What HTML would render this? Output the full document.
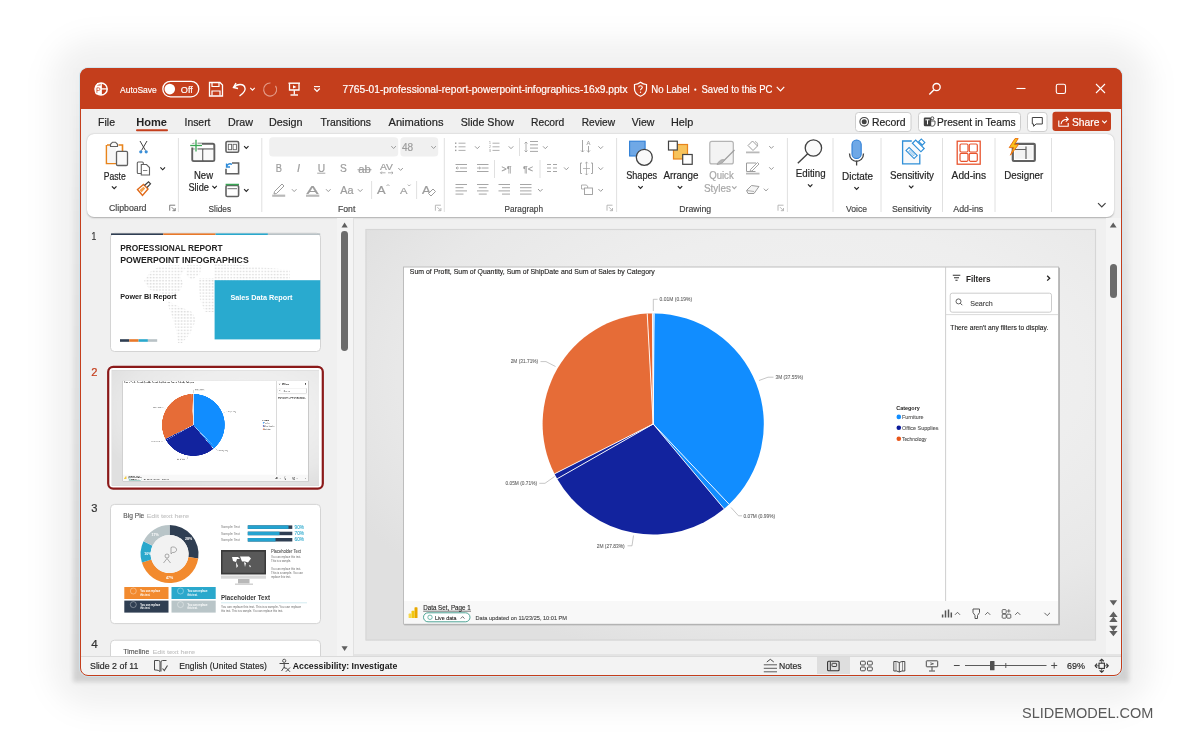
<!DOCTYPE html>
<html><head><meta charset="utf-8">
<style>
*{box-sizing:border-box;margin:0;padding:0}
html,body{width:1200px;height:743px;overflow:hidden;background:#fff;font-family:"Liberation Sans",sans-serif}
.a{position:absolute}
svg{position:absolute;left:0;top:0;will-change:transform}
text{font-family:"Liberation Sans",sans-serif;white-space:pre}
</style></head><body>
<div class="a" style="left:52px;top:40px;width:1098px;height:668px;border-radius:40px;background:rgba(0,0,0,0.055);filter:blur(14px)"></div>
<div class="a" style="left:73px;top:62px;width:1056px;height:620px;background:linear-gradient(180deg, rgba(0,0,0,0.0), rgba(0,0,0,0.05) 25%, rgba(0,0,0,0.08) 60%, rgba(0,0,0,0.13));filter:blur(2px)"></div>
<div class="a" style="left:80px;top:68px;width:1042px;height:608px;border-radius:8px;background:#f0f0f0"></div>
<div class="a" style="left:80px;top:68px;width:1042px;height:41px;border-radius:8px 8px 0 0;background:#c43e1c"></div>
<div class="a" style="left:87px;top:134px;width:1027px;height:83px;background:#fff;border-radius:7px;box-shadow:0 0.6px 1.6px rgba(0,0,0,0.28)"></div>
<div class="a" style="left:337px;top:218px;width:16px;height:438px;background:#f4f4f4"></div>
<div class="a" style="left:341.2px;top:231px;width:6.8px;height:120px;background:#6b6b6b;border-radius:3.4px"></div>
<div class="a" style="left:354px;top:653.5px;width:767px;height:2.5px;background:#e4e4e4"></div>
<div class="a" style="left:1106px;top:218px;width:15px;height:436px;background:#f5f5f5"></div>
<div class="a" style="left:1109.6px;top:264px;width:7px;height:33.5px;background:#6b6b6b;border-radius:3.5px"></div>
<div class="a" style="left:81px;top:656px;width:1040px;height:19px;background:#f3f3f3;border-top:1px solid #dadada;border-radius:0 0 7px 7px"></div>
<div class="a" style="left:816.7px;top:656.5px;width:33.3px;height:17.8px;background:#dedede"></div>
<svg width="1200" height="743" viewBox="0 0 1200 743">
<circle cx="101.1" cy="89" r="6.1" fill="none" stroke="#ffffff" stroke-width="1.5" />
<line x1="101.2" y1="83" x2="101.2" y2="95" stroke="#ffffff" stroke-width="1.3" />
<line x1="101.2" y1="88.9" x2="107" y2="88.9" stroke="#ffffff" stroke-width="1.3" />
<path d="M95.6 85.5 h5.6 v9 h-3.5 a2.6 2.6 0 0 1 -2.6 -2.6 z" stroke="none" stroke-width="1" fill="#ffffff" />
<path d="M96.9 92.8 v-5 h1.7 a1.35 1.35 0 0 1 0 2.7 h-1.7" stroke="#d9603f" stroke-width="0.9" fill="none" />
<path d="M97 83.3 C98.5 84.2 99.8 84.2 101.2 83.3" stroke="#ffffff" stroke-width="1" fill="none" />
<text x="120" y="92.62" font-size="9.1" fill="#ffffff" stroke="#ffffff" stroke-width="0.164" text-anchor="start" textLength="36.8" lengthAdjust="spacingAndGlyphs" >AutoSave</text>
<rect x="162.8" y="81.3" width="36" height="15.6" fill="none" rx="7.8" stroke="#ffffff" stroke-width="1.3" />
<circle cx="169.8" cy="89.1" r="5.3" fill="#ffffff" />
<text x="180.8" y="92.59" font-size="9.3" fill="#ffffff" stroke="#ffffff" stroke-width="0.167" text-anchor="start" textLength="12" lengthAdjust="spacingAndGlyphs" >Off</text>
<path d="M209.5 82.5 h10.5 l2.5 2.5 v11 h-13 z" stroke="#ffffff" stroke-width="1.3" fill="none" />
<path d="M212 82.5 v4 h7 v-4" stroke="#ffffff" stroke-width="1.2" fill="none" />
<path d="M212 95.5 v-4.5 h8 v4.5" stroke="#ffffff" stroke-width="1.2" fill="none" />
<path d="M236 83 L233.5 87.5 L238 88.5" stroke="#ffffff" stroke-width="1.4" fill="none" />
<path d="M234 87.3 C237 83.5 244 83.5 245 88 C246 91.5 242 94 239.5 96" stroke="#ffffff" stroke-width="1.4" fill="none" />
<path d="M250.25 87.8 L252.5 90.2 L254.75 87.8" stroke="#ffffff" stroke-width="1.1" fill="none" />
<path d="M270.5 83 A6.5 6.5 0 1 0 275.5 85.8" stroke="#e39a87" stroke-width="1.2" fill="none" />
<path d="M272.5 82 L276 85.5 L273 88" stroke="#e39a87" stroke-width="1.1" fill="none" opacity="0.0"/>
<rect x="288.5" y="82.5" width="11.5" height="1.4" fill="#ffffff" />
<path d="M289.5 83.5 v6.5 h9.5 v-6.5" stroke="#ffffff" stroke-width="1.3" fill="none" />
<path d="M293 85.2 L296.5 86.9 L293 88.6 z" stroke="none" stroke-width="1" fill="#ffffff" />
<line x1="294.3" y1="90.3" x2="294.3" y2="94.5" stroke="#ffffff" stroke-width="1.3" />
<line x1="290.5" y1="95" x2="298" y2="95" stroke="#ffffff" stroke-width="1.4" />
<line x1="314" y1="86.6" x2="320" y2="86.6" stroke="#ffffff" stroke-width="1.1" />
<path d="M314.2 88.5 L317 91.3 L319.8 88.5" stroke="#ffffff" stroke-width="1.2" fill="none" />
<text x="342.5" y="92.92" font-size="10.2" fill="#ffffff" stroke="#ffffff" stroke-width="0.184" text-anchor="start" textLength="285" lengthAdjust="spacingAndGlyphs" >7765-01-professional-report-powerpoint-infographics-16x9.pptx</text>
<path d="M640.5 82.3 C638.5 84 636.5 84.5 634.5 84.5 V89 C634.5 92.5 637 94.8 640.5 96.2 C644 94.8 646.5 92.5 646.5 89 V84.5 C644.5 84.5 642.5 84 640.5 82.3 Z" stroke="#ffffff" stroke-width="1.2" fill="none" />
<path d="M638.7 87.3 C638.7 85.3 642.3 85.3 642.3 87.3 C642.3 88.6 640.5 88.8 640.5 90.3" stroke="#ffffff" stroke-width="1.1" fill="none" />
<circle cx="640.5" cy="92.2" r="0.7" fill="#ffffff" />
<text x="651.2" y="92.92" font-size="10.2" fill="#ffffff" stroke="#ffffff" stroke-width="0.184" text-anchor="start" textLength="38.5" lengthAdjust="spacingAndGlyphs" >No Label</text>
<circle cx="695.3" cy="89.7" r="1.1" fill="#ffffff" />
<text x="701.5" y="92.92" font-size="10.2" fill="#ffffff" stroke="#ffffff" stroke-width="0.184" text-anchor="start" textLength="71" lengthAdjust="spacingAndGlyphs" >Saved to this PC</text>
<path d="M776.75 86.8 L780.5 90.8 L784.25 86.8" stroke="#ffffff" stroke-width="1.2" fill="none" />
<circle cx="936.6" cy="87.1" r="3.6" fill="none" stroke="#ffffff" stroke-width="1.3" />
<line x1="934" y1="89.8" x2="929.3" y2="94.5" stroke="#ffffff" stroke-width="1.4" />
<line x1="1016.5" y1="88.5" x2="1025.5" y2="88.5" stroke="#ffffff" stroke-width="1.1" />
<rect x="1056.3" y="84.3" width="9.2" height="9.2" fill="none" rx="1.8" stroke="#ffffff" stroke-width="1.1" />
<line x1="1096" y1="84" x2="1105" y2="93" stroke="#ffffff" stroke-width="1.1" />
<line x1="1105" y1="84" x2="1096" y2="93" stroke="#ffffff" stroke-width="1.1" />
<text x="98" y="126.48" font-size="11.2" fill="#242424" stroke="#242424" stroke-width="0.202" text-anchor="start" textLength="17" lengthAdjust="spacingAndGlyphs" >File</text>
<text x="136.2" y="126.48" font-size="11.2" fill="#242424" font-weight="700" text-anchor="start" textLength="30.8" lengthAdjust="spacingAndGlyphs" >Home</text>
<text x="184.5" y="126.48" font-size="11.2" fill="#242424" stroke="#242424" stroke-width="0.202" text-anchor="start" textLength="26" lengthAdjust="spacingAndGlyphs" >Insert</text>
<text x="228" y="126.48" font-size="11.2" fill="#242424" stroke="#242424" stroke-width="0.202" text-anchor="start" textLength="25" lengthAdjust="spacingAndGlyphs" >Draw</text>
<text x="269" y="126.48" font-size="11.2" fill="#242424" stroke="#242424" stroke-width="0.202" text-anchor="start" textLength="33.5" lengthAdjust="spacingAndGlyphs" >Design</text>
<text x="320.5" y="126.48" font-size="11.2" fill="#242424" stroke="#242424" stroke-width="0.202" text-anchor="start" textLength="50.5" lengthAdjust="spacingAndGlyphs" >Transitions</text>
<text x="388.5" y="126.48" font-size="11.2" fill="#242424" stroke="#242424" stroke-width="0.202" text-anchor="start" textLength="55" lengthAdjust="spacingAndGlyphs" >Animations</text>
<text x="460.7" y="126.48" font-size="11.2" fill="#242424" stroke="#242424" stroke-width="0.202" text-anchor="start" textLength="53.3" lengthAdjust="spacingAndGlyphs" >Slide Show</text>
<text x="531" y="126.48" font-size="11.2" fill="#242424" stroke="#242424" stroke-width="0.202" text-anchor="start" textLength="33.3" lengthAdjust="spacingAndGlyphs" >Record</text>
<text x="581.7" y="126.48" font-size="11.2" fill="#242424" stroke="#242424" stroke-width="0.202" text-anchor="start" textLength="33.3" lengthAdjust="spacingAndGlyphs" >Review</text>
<text x="631.7" y="126.48" font-size="11.2" fill="#242424" stroke="#242424" stroke-width="0.202" text-anchor="start" textLength="22.7" lengthAdjust="spacingAndGlyphs" >View</text>
<text x="671" y="126.48" font-size="11.2" fill="#242424" stroke="#242424" stroke-width="0.202" text-anchor="start" textLength="22.3" lengthAdjust="spacingAndGlyphs" >Help</text>
<rect x="136" y="129.2" width="32" height="2" fill="#c43e1c" rx="1" />
<rect x="855.5" y="112.5" width="55.5" height="19" fill="#fff" rx="3" stroke="#c8c8c8" stroke-width="0.9" />
<circle cx="864.2" cy="121.8" r="4.3" fill="none" stroke="#424242" stroke-width="1.1" />
<circle cx="864.2" cy="121.8" r="2.5" fill="#424242" />
<text x="872" y="126.14" font-size="10.8" fill="#242424" stroke="#242424" stroke-width="0.194" text-anchor="start" textLength="33.5" lengthAdjust="spacingAndGlyphs" >Record</text>
<rect x="918.5" y="112.5" width="102" height="19" fill="#fff" rx="3" stroke="#c8c8c8" stroke-width="0.9" />
<circle cx="932.3" cy="118.3" r="1.5" fill="none" stroke="#424242" stroke-width="0.9" />
<path d="M929.5 121 h5.5 v3 a2.8 2.8 0 0 1 -5.5 0 z" stroke="#424242" stroke-width="0.9" fill="#fff" />
<rect x="923.8" y="117.6" width="7.4" height="8.6" fill="#424242" rx="1.2" />
<path d="M925.4 119.8 h4.2 M927.5 119.8 v4.6" stroke="#fff" stroke-width="1" fill="none" />
<text x="937" y="126.14" font-size="10.8" fill="#242424" stroke="#242424" stroke-width="0.194" text-anchor="start" textLength="78.5" lengthAdjust="spacingAndGlyphs" >Present in Teams</text>
<rect x="1027.5" y="112.5" width="19.5" height="19" fill="#fff" rx="3" stroke="#c8c8c8" stroke-width="0.9" />
<path d="M1032.3 117.5 h10 v6.5 h-6.2 l-2.5 2.3 v-2.3 h-1.3 z" stroke="#424242" stroke-width="1" fill="none" />
<rect x="1052.5" y="111.8" width="58.5" height="19.2" fill="#c43e1c" rx="3" />
<path d="M1058.8 120.5 v5.8 h9.4 v-3.2" stroke="#fff" stroke-width="1.1" fill="none" />
<path d="M1061 124.3 C1061.5 120.5 1063.8 119.3 1068 119.3 M1065.8 116.9 L1068.3 119.3 L1065.8 121.7" stroke="#fff" stroke-width="1.1" fill="none" />
<text x="1072" y="126.21" font-size="11" fill="#fff" stroke="#fff" stroke-width="0.198" text-anchor="start" textLength="27.5" lengthAdjust="spacingAndGlyphs" >Share</text>
<path d="M1102.2 120.6 L1104.5 123.0 L1106.8 120.6" stroke="#fff" stroke-width="1.1" fill="none" />
<line x1="178.4" y1="138" x2="178.4" y2="212" stroke="#e0e0e0" stroke-width="1" />
<line x1="261.8" y1="138" x2="261.8" y2="212" stroke="#e0e0e0" stroke-width="1" />
<line x1="444.3" y1="138" x2="444.3" y2="212" stroke="#e0e0e0" stroke-width="1" />
<line x1="616.6" y1="138" x2="616.6" y2="212" stroke="#e0e0e0" stroke-width="1" />
<line x1="787.4" y1="138" x2="787.4" y2="212" stroke="#e0e0e0" stroke-width="1" />
<line x1="833" y1="138" x2="833" y2="212" stroke="#e0e0e0" stroke-width="1" />
<line x1="881" y1="138" x2="881" y2="212" stroke="#e0e0e0" stroke-width="1" />
<line x1="942.5" y1="138" x2="942.5" y2="212" stroke="#e0e0e0" stroke-width="1" />
<line x1="995" y1="138" x2="995" y2="212" stroke="#e0e0e0" stroke-width="1" />
<line x1="1051.5" y1="138" x2="1051.5" y2="212" stroke="#e0e0e0" stroke-width="1" />
<path d="M107 145 h3.5 M118.5 145 h4 v6" stroke="#e8841c" stroke-width="1.6" fill="none" />
<path d="M106.5 145 v18.5 h9.5" stroke="#e8841c" stroke-width="1.6" fill="none" />
<rect x="107.4" y="146" width="8.6" height="17" fill="#f7f7f7" />
<path d="M110.5 146.5 L110.5 144.3 L112.5 142.2 L115.5 142.2 L117.5 144.3 L117.5 146.5 Z" stroke="#616161" stroke-width="1.1" fill="#fafafa" />
<rect x="116.5" y="151.3" width="11" height="14.2" fill="#fafafa" rx="1.2" stroke="#616161" stroke-width="1.3" />
<text x="103.8" y="179.76" font-size="10.6" fill="#242424" stroke="#242424" stroke-width="0.191" text-anchor="start" textLength="22" lengthAdjust="spacingAndGlyphs" >Paste</text>
<path d="M111.9 186.3 L114.2 188.7 L116.5 186.3" stroke="#242424" stroke-width="1.2" fill="none" />
<path d="M140 141 L145.5 150.5 M147 141 L141.5 150.5" stroke="#424242" stroke-width="1" fill="none" />
<circle cx="140.8" cy="151.8" r="1.6" fill="#3b8fd8" />
<circle cx="146.2" cy="151.8" r="1.6" fill="#3b8fd8" />
<rect x="137.3" y="162" width="6" height="11.5" fill="#fff" rx="1" stroke="#616161" stroke-width="1.1" />
<path d="M141.3 164.5 h5.2 l3 3 v7.5 h-8.2 z" stroke="#616161" stroke-width="1.1" fill="#fff" />
<line x1="143" y1="170.5" x2="147.3" y2="170.5" stroke="#616161" stroke-width="0.8" />
<path d="M160.39999999999998 167.4 L162.7 169.79999999999998 L165.0 167.4" stroke="#242424" stroke-width="1.1" fill="none" />
<path d="M137.5 189.5 L143.5 184.5 L148 189 L142.5 195.5 Z" stroke="#e06a1a" stroke-width="1.4" fill="#fff" />
<path d="M139.5 190 L143.5 186.7 L145.2 188.5 L141.5 192.6 Z" stroke="none" stroke-width="1" fill="#f5a04a" />
<path d="M144.5 185.5 L148.5 181.8 L150.5 183.8 L147 187.5" stroke="#424242" stroke-width="1.2" fill="none" />
<text x="109" y="211.20" font-size="9.6" fill="#424242" stroke="#424242" stroke-width="0.173" text-anchor="start" textLength="37.5" lengthAdjust="spacingAndGlyphs" >Clipboard</text>
<path d="M169.7 210.7 v-5.5 h5.5" stroke="#707070" stroke-width="0.9" fill="none" />
<path d="M171.7 207.2 L175.2 210.7 M175.2 208.0 v2.7 h-2.7" stroke="#707070" stroke-width="0.9" fill="none" />
<rect x="192.3" y="143.8" width="22" height="17.2" fill="none" rx="1.5" stroke="#616161" stroke-width="2" />
<line x1="202.8" y1="149" x2="202.8" y2="160" stroke="#616161" stroke-width="1.3" />
<line x1="193.5" y1="149" x2="213.5" y2="149" stroke="#616161" stroke-width="1.3" />
<rect x="193.6" y="149.8" width="8.4" height="10.4" fill="#fafafa" />
<rect x="203.6" y="149.8" width="9.6" height="10.4" fill="#fafafa" />
<line x1="190" y1="145.5" x2="202" y2="145.5" stroke="#fff" stroke-width="4" />
<line x1="196" y1="139.8" x2="196" y2="151.6" stroke="#fff" stroke-width="3" />
<line x1="190.2" y1="145.5" x2="202" y2="145.5" stroke="#3aa655" stroke-width="1.3" />
<line x1="196" y1="139.8" x2="196" y2="151.6" stroke="#3aa655" stroke-width="1.3" />
<text x="194" y="178.66" font-size="10.6" fill="#242424" stroke="#242424" stroke-width="0.191" text-anchor="start" textLength="19" lengthAdjust="spacingAndGlyphs" >New</text>
<text x="188.4" y="191.46" font-size="10.6" fill="#242424" stroke="#242424" stroke-width="0.191" text-anchor="start" textLength="20.5" lengthAdjust="spacingAndGlyphs" >Slide</text>
<path d="M212.4 185.85 L214.6 188.15 L216.79999999999998 185.85" stroke="#242424" stroke-width="1.1" fill="none" />
<rect x="226" y="141.5" width="12.6" height="10.8" fill="none" rx="1.3" stroke="#616161" stroke-width="1.6" />
<rect x="228.3" y="144.3" width="3.3" height="5.4" fill="none" stroke="#616161" stroke-width="0.9" />
<rect x="233.1" y="144.3" width="3.3" height="5.4" fill="none" stroke="#616161" stroke-width="0.9" />
<path d="M244.10000000000002 146.04999999999998 L246.3 148.35 L248.5 146.04999999999998" stroke="#242424" stroke-width="1.1" fill="none" />
<path d="M232 163 h6.6 v10.8 h-12.6 v-5" stroke="#616161" stroke-width="1.6" fill="none" />
<path d="M226.5 167 C227 164 229.5 163 232 164.3 M226.5 163.5 v3.5 h3.5" stroke="#2c8ad8" stroke-width="1.3" fill="none" />
<rect x="226" y="185.5" width="12.6" height="11" fill="none" rx="1.3" stroke="#616161" stroke-width="1.6" />
<line x1="225.6" y1="184.5" x2="239" y2="184.5" stroke="#3aa655" stroke-width="1.5" />
<line x1="227.5" y1="188.7" x2="237" y2="188.7" stroke="#616161" stroke-width="0.9" />
<path d="M244.10000000000002 189.04999999999998 L246.3 191.35 L248.5 189.04999999999998" stroke="#242424" stroke-width="1.1" fill="none" />
<text x="208.6" y="212.10" font-size="9.6" fill="#424242" stroke="#424242" stroke-width="0.173" text-anchor="start" textLength="22.5" lengthAdjust="spacingAndGlyphs" >Slides</text>
<rect x="269.2" y="137.2" width="129" height="19.4" fill="#f0f0f0" rx="3.5" />
<rect x="400.4" y="137.2" width="37.8" height="19.4" fill="#f0f0f0" rx="3.5" />
<path d="M391.3 146.10000000000002 L393.6 148.5 L395.90000000000003 146.10000000000002" stroke="#9c9c9c" stroke-width="1" fill="none" />
<path d="M431.3 146.10000000000002 L433.6 148.5 L435.90000000000003 146.10000000000002" stroke="#9c9c9c" stroke-width="1" fill="none" />
<text x="402" y="150.79" font-size="10.4" fill="#9c9c9c" stroke="#9c9c9c" stroke-width="0.187" text-anchor="start" textLength="11.2" lengthAdjust="spacingAndGlyphs" >48</text>
<text x="275.8" y="171.97" font-size="10.9" fill="#9c9c9c" stroke="#9c9c9c" stroke-width="0.196" text-anchor="start" textLength="6.2" lengthAdjust="spacingAndGlyphs" >B</text>
<text x="297" y="172.01" font-size="11" fill="#9c9c9c" stroke="#9c9c9c" stroke-width="0.198" text-anchor="start" font-style="italic" font-family="Liberation Serif">I</text>
<text x="317.7" y="171.56" font-size="10.6" fill="#9c9c9c" stroke="#9c9c9c" stroke-width="0.191" text-anchor="start" textLength="7.4" lengthAdjust="spacingAndGlyphs" >U</text>
<line x1="317.2" y1="173.2" x2="325.3" y2="173.2" stroke="#9c9c9c" stroke-width="0.9" />
<text x="340" y="172.08" font-size="11.2" fill="#9c9c9c" stroke="#9c9c9c" stroke-width="0.202" text-anchor="start" textLength="6.8" lengthAdjust="spacingAndGlyphs" >S</text>
<text x="358.2" y="172.99" font-size="10.4" fill="#9c9c9c" stroke="#9c9c9c" stroke-width="0.187" text-anchor="start" textLength="12.6" lengthAdjust="spacingAndGlyphs" >ab</text>
<line x1="357.5" y1="169.7" x2="371.5" y2="169.7" stroke="#9c9c9c" stroke-width="0.9" />
<text x="380" y="169.77" font-size="9.8" fill="#9c9c9c" stroke="#9c9c9c" stroke-width="0.176" text-anchor="start" textLength="13" lengthAdjust="spacingAndGlyphs" >AV</text>
<path d="M380.5 172.8 h5 M381.8 171.5 L380.5 172.8 L381.8 174.1 M388 172.8 h5 M391.7 171.5 L393 172.8 L391.7 174.1" stroke="#9c9c9c" stroke-width="0.8" fill="none" />
<path d="M398.3 168.0 L400.6 170.39999999999998 L402.90000000000003 168.0" stroke="#9c9c9c" stroke-width="1" fill="none" />
<path d="M274.5 191.5 L282 184 L284 186 L276.5 193.5 L274 194 Z" stroke="#9c9c9c" stroke-width="1" fill="none" />
<rect x="272.2" y="194.6" width="13" height="2.2" fill="#b9b9b9" />
<path d="M291.9 189.20000000000002 L294.2 191.6 L296.5 189.20000000000002" stroke="#9c9c9c" stroke-width="1" fill="none" />
<text x="306.5" y="194.01" font-size="11" fill="#9c9c9c" stroke="#9c9c9c" stroke-width="0.198" text-anchor="start" textLength="12" lengthAdjust="spacingAndGlyphs" >A</text>
<rect x="306" y="194.6" width="13.3" height="2.2" fill="#b9b9b9" />
<path d="M326.0 189.20000000000002 L328.3 191.6 L330.6 189.20000000000002" stroke="#9c9c9c" stroke-width="1" fill="none" />
<text x="340.3" y="194.29" font-size="10.4" fill="#9c9c9c" stroke="#9c9c9c" stroke-width="0.187" text-anchor="start" textLength="13.3" lengthAdjust="spacingAndGlyphs" >Aa</text>
<path d="M357.9 189.20000000000002 L360.2 191.6 L362.5 189.20000000000002" stroke="#9c9c9c" stroke-width="1" fill="none" />
<line x1="371.6" y1="181" x2="371.6" y2="199" stroke="#e0e0e0" stroke-width="1" />
<text x="377" y="194.38" font-size="11.2" fill="#9c9c9c" stroke="#9c9c9c" stroke-width="0.202" text-anchor="start" textLength="8.6" lengthAdjust="spacingAndGlyphs" >A</text>
<path d="M386.5 186 L388 184.5 L389.5 186" stroke="#9c9c9c" stroke-width="0.8" fill="none" />
<text x="400" y="194.30" font-size="9.6" fill="#9c9c9c" stroke="#9c9c9c" stroke-width="0.173" text-anchor="start" textLength="7.5" lengthAdjust="spacingAndGlyphs" >A</text>
<path d="M407.8 184.6 L409.2 186 L410.6 184.6" stroke="#9c9c9c" stroke-width="0.8" fill="none" />
<line x1="416.6" y1="181" x2="416.6" y2="199" stroke="#e0e0e0" stroke-width="1" />
<text x="422" y="194.38" font-size="11.2" fill="#9c9c9c" stroke="#9c9c9c" stroke-width="0.202" text-anchor="start" textLength="8.6" lengthAdjust="spacingAndGlyphs" >A</text>
<path d="M428.5 193.5 L433 189 L435.5 191.5 L431 196 Z" stroke="#9c9c9c" stroke-width="1" fill="#fff" />
<text x="338" y="212.00" font-size="9.6" fill="#424242" stroke="#424242" stroke-width="0.173" text-anchor="start" textLength="17.3" lengthAdjust="spacingAndGlyphs" >Font</text>
<path d="M435.4 210.7 v-5.5 h5.5" stroke="#b0b0b0" stroke-width="0.9" fill="none" />
<path d="M437.4 207.2 L440.9 210.7 M440.9 208.0 v2.7 h-2.7" stroke="#b0b0b0" stroke-width="0.9" fill="none" />
<rect x="455" y="142.5" width="1.4" height="1.4" fill="#9c9c9c" />
<line x1="458.5" y1="143.2" x2="465.5" y2="143.2" stroke="#9c9c9c" stroke-width="0.8" />
<rect x="455" y="146.1" width="1.4" height="1.4" fill="#9c9c9c" />
<line x1="458.5" y1="146.79999999999998" x2="465.5" y2="146.79999999999998" stroke="#9c9c9c" stroke-width="0.8" />
<rect x="455" y="149.7" width="1.4" height="1.4" fill="#9c9c9c" />
<line x1="458.5" y1="150.39999999999998" x2="465.5" y2="150.39999999999998" stroke="#9c9c9c" stroke-width="0.8" />
<path d="M475.0 146.3 L477.3 148.7 L479.6 146.3" stroke="#9c9c9c" stroke-width="1" fill="none" />
<text x="489" y="144.44" font-size="3.4" fill="#9c9c9c" stroke="#9c9c9c" stroke-width="0.061" text-anchor="start" >1</text>
<line x1="492.5" y1="143.2" x2="499.5" y2="143.2" stroke="#9c9c9c" stroke-width="0.8" />
<text x="489" y="148.04" font-size="3.4" fill="#9c9c9c" stroke="#9c9c9c" stroke-width="0.061" text-anchor="start" >2</text>
<line x1="492.5" y1="146.79999999999998" x2="499.5" y2="146.79999999999998" stroke="#9c9c9c" stroke-width="0.8" />
<text x="489" y="151.64" font-size="3.4" fill="#9c9c9c" stroke="#9c9c9c" stroke-width="0.061" text-anchor="start" >3</text>
<line x1="492.5" y1="150.39999999999998" x2="499.5" y2="150.39999999999998" stroke="#9c9c9c" stroke-width="0.8" />
<path d="M508.7 146.3 L511 148.7 L513.3 146.3" stroke="#9c9c9c" stroke-width="1" fill="none" />
<line x1="519.5" y1="138" x2="519.5" y2="156" stroke="#e0e0e0" stroke-width="1" />
<line x1="530" y1="141.5" x2="538" y2="141.5" stroke="#9c9c9c" stroke-width="0.9" />
<line x1="530" y1="144.8" x2="538" y2="144.8" stroke="#9c9c9c" stroke-width="0.9" />
<line x1="530" y1="148.1" x2="538" y2="148.1" stroke="#9c9c9c" stroke-width="0.9" />
<line x1="530" y1="151.4" x2="538" y2="151.4" stroke="#9c9c9c" stroke-width="0.9" />
<path d="M526 142 v10 M524.5 143.5 L526 142 L527.5 143.5 M524.5 150.5 L526 152 L527.5 150.5" stroke="#9c9c9c" stroke-width="0.8" fill="none" />
<path d="M543.0 146.3 L545.3 148.7 L547.5999999999999 146.3" stroke="#9c9c9c" stroke-width="1" fill="none" />
<path d="M582.5 140 v12 M581 150.5 L582.5 152 L584 150.5" stroke="#9c9c9c" stroke-width="0.9" fill="none" />
<text x="586.5" y="145.11" font-size="5.8" fill="#9c9c9c" stroke="#9c9c9c" stroke-width="0.104" text-anchor="start" >A</text>
<path d="M588.5 146 v6.5 M587 150.5 L588.5 152 L590 150.5" stroke="#9c9c9c" stroke-width="0.9" fill="none" />
<path d="M598.4000000000001 146.3 L600.7 148.7 L603.0 146.3" stroke="#9c9c9c" stroke-width="1" fill="none" />
<line x1="455.5" y1="164.5" x2="467.0" y2="164.5" stroke="#9c9c9c" stroke-width="0.9" />
<line x1="460.0" y1="168.0" x2="467.0" y2="168.0" stroke="#9c9c9c" stroke-width="0.9" />
<line x1="455.5" y1="171.5" x2="467.0" y2="171.5" stroke="#9c9c9c" stroke-width="0.9" />
<line x1="477" y1="164.5" x2="488.5" y2="164.5" stroke="#9c9c9c" stroke-width="0.9" />
<line x1="481.5" y1="168.0" x2="488.5" y2="168.0" stroke="#9c9c9c" stroke-width="0.9" />
<line x1="477" y1="171.5" x2="488.5" y2="171.5" stroke="#9c9c9c" stroke-width="0.9" />
<path d="M459 168 L456 168 M457.5 166.8 L456 168 L457.5 169.2" stroke="#9c9c9c" stroke-width="0.8" fill="none" />
<path d="M477 168 L480.5 168 M479 166.8 L480.5 168 L479 169.2" stroke="#9c9c9c" stroke-width="0.8" fill="none" />
<line x1="494.5" y1="160" x2="494.5" y2="178" stroke="#e0e0e0" stroke-width="1" />
<text x="501.5" y="171.60" font-size="8.5" fill="#9c9c9c" stroke="#9c9c9c" stroke-width="0.153" text-anchor="start" textLength="10" lengthAdjust="spacingAndGlyphs" >&gt;¶</text>
<text x="523" y="171.60" font-size="8.5" fill="#9c9c9c" stroke="#9c9c9c" stroke-width="0.153" text-anchor="start" textLength="10" lengthAdjust="spacingAndGlyphs" >¶&lt;</text>
<line x1="540" y1="160" x2="540" y2="178" stroke="#e0e0e0" stroke-width="1" />
<line x1="547" y1="164.5" x2="551" y2="164.5" stroke="#9c9c9c" stroke-width="0.9" />
<line x1="553" y1="164.5" x2="557" y2="164.5" stroke="#9c9c9c" stroke-width="0.9" />
<line x1="547" y1="168.0" x2="551" y2="168.0" stroke="#9c9c9c" stroke-width="0.9" />
<line x1="553" y1="168.0" x2="557" y2="168.0" stroke="#9c9c9c" stroke-width="0.9" />
<line x1="547" y1="171.5" x2="551" y2="171.5" stroke="#9c9c9c" stroke-width="0.9" />
<line x1="553" y1="171.5" x2="557" y2="171.5" stroke="#9c9c9c" stroke-width="0.9" />
<path d="M564.0 167.4 L566.3 169.79999999999998 L568.5999999999999 167.4" stroke="#9c9c9c" stroke-width="1" fill="none" />
<path d="M582 163 h-1.5 v10.5 h1.5 M591 163 h1.5 v10.5 h-1.5" stroke="#9c9c9c" stroke-width="0.9" fill="none" />
<path d="M586.5 162 v13 M585.2 163.3 L586.5 162 L587.8 163.3 M585.2 173.7 L586.5 175 L587.8 173.7 M583 168.5 h7" stroke="#9c9c9c" stroke-width="0.7" fill="none" />
<path d="M598.4000000000001 167.4 L600.7 169.79999999999998 L603.0 167.4" stroke="#9c9c9c" stroke-width="1" fill="none" />
<line x1="455.5" y1="184.5" x2="467.0" y2="184.5" stroke="#9c9c9c" stroke-width="0.9" />
<line x1="455.5" y1="187.7" x2="463.5" y2="187.7" stroke="#9c9c9c" stroke-width="0.9" />
<line x1="455.5" y1="190.9" x2="467.0" y2="190.9" stroke="#9c9c9c" stroke-width="0.9" />
<line x1="455.5" y1="194.1" x2="463.5" y2="194.1" stroke="#9c9c9c" stroke-width="0.9" />
<line x1="477.0" y1="184.5" x2="488.5" y2="184.5" stroke="#9c9c9c" stroke-width="0.9" />
<line x1="478.75" y1="187.7" x2="486.75" y2="187.7" stroke="#9c9c9c" stroke-width="0.9" />
<line x1="477.0" y1="190.9" x2="488.5" y2="190.9" stroke="#9c9c9c" stroke-width="0.9" />
<line x1="478.75" y1="194.1" x2="486.75" y2="194.1" stroke="#9c9c9c" stroke-width="0.9" />
<line x1="498.5" y1="184.5" x2="510.0" y2="184.5" stroke="#9c9c9c" stroke-width="0.9" />
<line x1="502.0" y1="187.7" x2="510.0" y2="187.7" stroke="#9c9c9c" stroke-width="0.9" />
<line x1="498.5" y1="190.9" x2="510.0" y2="190.9" stroke="#9c9c9c" stroke-width="0.9" />
<line x1="502.0" y1="194.1" x2="510.0" y2="194.1" stroke="#9c9c9c" stroke-width="0.9" />
<line x1="520" y1="184.5" x2="531.5" y2="184.5" stroke="#9c9c9c" stroke-width="0.9" />
<line x1="520" y1="187.7" x2="531.5" y2="187.7" stroke="#9c9c9c" stroke-width="0.9" />
<line x1="520" y1="190.9" x2="531.5" y2="190.9" stroke="#9c9c9c" stroke-width="0.9" />
<line x1="520" y1="194.1" x2="531.5" y2="194.1" stroke="#9c9c9c" stroke-width="0.9" />
<path d="M538.0 189.0 L540.3 191.39999999999998 L542.5999999999999 189.0" stroke="#9c9c9c" stroke-width="1" fill="none" />
<path d="M581.5 185 h5 l1.5 2 l-1.5 2 h-5 z" stroke="#9c9c9c" stroke-width="0.8" fill="none" />
<rect x="584.5" y="188" width="8" height="6.5" fill="#fff" stroke="#9c9c9c" stroke-width="0.9" />
<path d="M598.4000000000001 189.0 L600.7 191.39999999999998 L603.0 189.0" stroke="#9c9c9c" stroke-width="1" fill="none" />
<text x="504.5" y="212.00" font-size="9.6" fill="#424242" stroke="#424242" stroke-width="0.173" text-anchor="start" textLength="38.5" lengthAdjust="spacingAndGlyphs" >Paragraph</text>
<path d="M607 210.7 v-5.5 h5.5" stroke="#b0b0b0" stroke-width="0.9" fill="none" />
<path d="M609 207.2 L612.5 210.7 M612.5 208.0 v2.7 h-2.7" stroke="#b0b0b0" stroke-width="0.9" fill="none" />
<rect x="629.6" y="141.2" width="15.5" height="14.8" fill="#6fa8e6" stroke="#2f7fd6" stroke-width="1.1" />
<circle cx="644.3" cy="157.3" r="8" fill="#fafafa" stroke="#424242" stroke-width="1.3" />
<text x="626.2" y="179.16" font-size="10.6" fill="#242424" stroke="#242424" stroke-width="0.191" text-anchor="start" textLength="31" lengthAdjust="spacingAndGlyphs" >Shapes</text>
<path d="M638.3 186.04999999999998 L640.5 188.35 L642.7 186.04999999999998" stroke="#242424" stroke-width="1.2" fill="none" />
<rect x="673.5" y="144.5" width="14" height="14.5" fill="#f7c35c" stroke="#e8841c" stroke-width="1.2" />
<rect x="668.5" y="141.2" width="8.8" height="8.8" fill="#fff" stroke="#424242" stroke-width="1.2" />
<rect x="682.7" y="154.5" width="9.5" height="9.8" fill="#fff" stroke="#424242" stroke-width="1.2" />
<text x="663.5" y="179.16" font-size="10.6" fill="#242424" stroke="#242424" stroke-width="0.191" text-anchor="start" textLength="35" lengthAdjust="spacingAndGlyphs" >Arrange</text>
<path d="M677.8 186.04999999999998 L680 188.35 L682.2 186.04999999999998" stroke="#242424" stroke-width="1.2" fill="none" />
<rect x="709.8" y="141.4" width="23.5" height="22.5" fill="#f3f3f3" rx="2" stroke="#b4b4b4" stroke-width="1.2" />
<path d="M734.5 150 L724 160.5" stroke="#a0a0a0" stroke-width="1.3" fill="none" />
<path d="M724.5 160 C722 158.5 718.5 161 717 164.5 C720.5 164 723.5 163 724.5 160 Z" stroke="#a0a0a0" stroke-width="0.8" fill="#b4b4b4" />
<text x="709.2" y="179.16" font-size="10.6" fill="#a6a6a6" stroke="#a6a6a6" stroke-width="0.191" text-anchor="start" textLength="24.5" lengthAdjust="spacingAndGlyphs" >Quick</text>
<text x="704" y="191.86" font-size="10.6" fill="#a6a6a6" stroke="#a6a6a6" stroke-width="0.191" text-anchor="start" textLength="27" lengthAdjust="spacingAndGlyphs" >Styles</text>
<path d="M732.0999999999999 186.35 L734.3 188.65 L736.5 186.35" stroke="#a6a6a6" stroke-width="1.1" fill="none" />
<path d="M748 145.5 L752.5 141 L757.5 146 L753 150.5 Z" stroke="#9c9c9c" stroke-width="1" fill="none" />
<path d="M755 141.5 C757 142 758 143.5 757.5 146" stroke="#9c9c9c" stroke-width="0.8" fill="none" />
<rect x="746" y="151.5" width="13.5" height="1.8" fill="#b9b9b9" />
<path d="M769.1999999999999 146.04999999999998 L771.4 148.35 L773.6 146.04999999999998" stroke="#9c9c9c" stroke-width="1" fill="none" />
<path d="M756 163 h-9.5 v8.5 h9" stroke="#9c9c9c" stroke-width="1" fill="none" />
<path d="M750.5 169.5 L757.5 162.5 L759 164 L752 171 L750.2 171.3 Z" stroke="#9c9c9c" stroke-width="0.9" fill="none" />
<rect x="746" y="172.7" width="13.5" height="1.8" fill="#b9b9b9" />
<path d="M769.1999999999999 167.25 L771.4 169.55 L773.6 167.25" stroke="#9c9c9c" stroke-width="1" fill="none" />
<path d="M746.5 190.5 L751.5 185.5 L759 186.5 L754 193.5 L748 193.5 Z" stroke="#9c9c9c" stroke-width="1" fill="#f5f5f5" />
<line x1="747" y1="190.5" x2="754" y2="191.5" stroke="#9c9c9c" stroke-width="0.8" />
<path d="M763.8 188.65 L766 190.95000000000002 L768.2 188.65" stroke="#9c9c9c" stroke-width="1" fill="none" />
<text x="679.2" y="212.00" font-size="9.6" fill="#424242" stroke="#424242" stroke-width="0.173" text-anchor="start" textLength="32" lengthAdjust="spacingAndGlyphs" >Drawing</text>
<path d="M778 210.7 v-5.5 h5.5" stroke="#b0b0b0" stroke-width="0.9" fill="none" />
<path d="M780 207.2 L783.5 210.7 M783.5 208.0 v2.7 h-2.7" stroke="#b0b0b0" stroke-width="0.9" fill="none" />
<circle cx="813.4" cy="148" r="8.2" fill="#fafafa" stroke="#424242" stroke-width="1.3" />
<line x1="807.7" y1="153.8" x2="797.8" y2="163.3" stroke="#424242" stroke-width="1.4" />
<text x="795.8" y="177.06" font-size="10.6" fill="#242424" stroke="#242424" stroke-width="0.191" text-anchor="start" textLength="29.8" lengthAdjust="spacingAndGlyphs" >Editing</text>
<path d="M808.0 184.35 L810.2 186.65 L812.4000000000001 184.35" stroke="#242424" stroke-width="1.2" fill="none" />
<rect x="852" y="140" width="9.2" height="18.5" fill="#6fa8e6" rx="4.6" stroke="#2f7fd6" stroke-width="1.1" />
<path d="M849.5 153.5 C849.5 164 863.5 164 863.5 153.5" stroke="#424242" stroke-width="1.3" fill="none" />
<line x1="856.6" y1="160.5" x2="856.6" y2="165.5" stroke="#424242" stroke-width="1.3" />
<text x="842" y="179.66" font-size="10.6" fill="#242424" stroke="#242424" stroke-width="0.191" text-anchor="start" textLength="31" lengthAdjust="spacingAndGlyphs" >Dictate</text>
<path d="M854.4 187.04999999999998 L856.6 189.35 L858.8000000000001 187.04999999999998" stroke="#242424" stroke-width="1.2" fill="none" />
<text x="846" y="212.00" font-size="9.6" fill="#424242" stroke="#424242" stroke-width="0.173" text-anchor="start" textLength="21" lengthAdjust="spacingAndGlyphs" >Voice</text>
<rect x="902.6" y="141" width="17.2" height="23" fill="#f7f9fb" />
<path d="M911.8 141 h-9.2 v22.9 h17.2 v-9.6" stroke="#2f8fd8" stroke-width="1.3" fill="none" />
<rect x="905.9" y="150.8" width="11.4" height="4.4" fill="#fff" stroke="#2f8fd8" stroke-width="1.1" transform="rotate(45 911.6 153)"/>
<rect x="908.2" y="152.3" width="6.8" height="1.4" fill="none" stroke="#2f8fd8" stroke-width="0.6" transform="rotate(45 911.6 153)"/>
<rect x="912.3" y="143.6" width="12" height="4.6" fill="#fff" stroke="#2f8fd8" stroke-width="1.2" transform="rotate(45 918.3 145.9)"/>
<rect x="919.3" y="140.3" width="5" height="3.6" fill="#fff" stroke="#2f8fd8" stroke-width="1.1" transform="rotate(45 921.8 142.1)"/>
<text x="890" y="179.06" font-size="10.6" fill="#242424" stroke="#242424" stroke-width="0.191" text-anchor="start" textLength="44" lengthAdjust="spacingAndGlyphs" >Sensitivity</text>
<path d="M909.0 185.65 L911.2 187.95000000000002 L913.4000000000001 185.65" stroke="#242424" stroke-width="1.2" fill="none" />
<text x="892" y="212.10" font-size="9.6" fill="#424242" stroke="#424242" stroke-width="0.173" text-anchor="start" textLength="39.5" lengthAdjust="spacingAndGlyphs" >Sensitivity</text>
<rect x="957.2" y="141.2" width="23" height="23" fill="#fff" stroke="#e8542e" stroke-width="1.3" />
<rect x="960" y="144" width="8" height="8" fill="none" rx="1.2" stroke="#e8542e" stroke-width="1.2" />
<rect x="969.3" y="144" width="8" height="8" fill="none" rx="1.2" stroke="#e8542e" stroke-width="1.2" />
<rect x="960" y="153.3" width="8" height="8" fill="none" rx="1.2" stroke="#e8542e" stroke-width="1.2" />
<rect x="969.3" y="153.3" width="8" height="8" fill="none" rx="1.2" stroke="#e8542e" stroke-width="1.2" />
<text x="951.6" y="179.06" font-size="10.6" fill="#242424" stroke="#242424" stroke-width="0.191" text-anchor="start" textLength="34.5" lengthAdjust="spacingAndGlyphs" >Add-ins</text>
<text x="953.3" y="212.30" font-size="9.6" fill="#424242" stroke="#424242" stroke-width="0.173" text-anchor="start" textLength="30" lengthAdjust="spacingAndGlyphs" >Add-ins</text>
<rect x="1012.8" y="143.8" width="22" height="17.2" fill="none" rx="1" stroke="#616161" stroke-width="2.2" />
<rect x="1015" y="146" width="17.6" height="12.8" fill="#f3f3f3" />
<path d="M1026 146.5 v12.5 M1015 149.5 h11" stroke="#616161" stroke-width="1.2" fill="none" />
<path d="M1015 138.6 L1009.2 147.6 L1013.6 147.6 L1010.4 155.2 L1018.6 144.4 L1014.4 144.4 L1018.2 138.6 Z" stroke="#ea6a0c" stroke-width="0.9" fill="#f9c21a" />
<text x="1004.3" y="179.06" font-size="10.6" fill="#242424" stroke="#242424" stroke-width="0.191" text-anchor="start" textLength="39" lengthAdjust="spacingAndGlyphs" >Designer</text>
<path d="M1098.05 203.1 L1101.8 206.9 L1105.55 203.1" stroke="#424242" stroke-width="1.2" fill="none" />
<line x1="353.5" y1="218" x2="353.5" y2="656" stroke="#e1e1e1" stroke-width="1" />
<path d="M341.5 227.5 L344.6 222.6 L347.7 227.5 Z" stroke="none" stroke-width="1" fill="#5f5f5f" />
<path d="M341.5 646.2 L344.6 651.1 L347.7 646.2 Z" stroke="none" stroke-width="1" fill="#5f5f5f" />
<path d="M1109.8 227.5 L1113.2 222.4 L1116.6 227.5 Z" stroke="none" stroke-width="1" fill="#5f5f5f" />
<path d="M1109.6 600.3 L1113.4 605.6 L1117.2 600.3 Z" stroke="none" stroke-width="1" fill="#5f5f5f" />
<path d="M1109.2 617 L1113.4 611.6 L1117.6 617 Z M1109.2 621.9 L1113.4 616.5 L1117.6 621.9 Z" stroke="none" stroke-width="1" fill="#5f5f5f" />
<path d="M1109.2 625.8 L1113.4 631.2 L1117.6 625.8 Z M1109.2 630.9 L1113.4 636.3 L1117.6 630.9 Z" stroke="none" stroke-width="1" fill="#5f5f5f" />
<radialGradient id="slbg" cx="62%" cy="36%" r="72%"><stop offset="0" stop-color="#f2f2f2"/><stop offset="0.5" stop-color="#eeeeee"/><stop offset="0.8" stop-color="#e8e8e8"/><stop offset="1" stop-color="#e0e0e0"/></radialGradient>
<g id="sl">
<rect x="365.5" y="229" width="730.5" height="411.5" fill="url(#slbg)" />
<rect x="366" y="229.5" width="729.5" height="410.5" fill="none" stroke="#d6d6d6" stroke-width="1.1" />
<rect x="404.2" y="267.7" width="655.6" height="357.6" fill="#a9a9a9" />
<rect x="403.5" y="267" width="655" height="357" fill="#fff" stroke="#bdbdbd" stroke-width="1" />
<text x="409.8" y="274.35" font-size="7" fill="#252423" stroke="#252423" stroke-width="0.126" text-anchor="start" textLength="245" lengthAdjust="spacingAndGlyphs" >Sum of Profit, Sum of Quantity, Sum of ShipDate and Sum of Sales by Category</text>
<path d="M653.2 424.0 L654.17 313.40 A110.6 110.6 0 0 1 729.19 504.36 Z" stroke="none" stroke-width="1" fill="#118dff" />
<path d="M653.2 424.0 L729.19 504.36 A110.6 110.6 0 0 1 724.14 508.85 Z" stroke="none" stroke-width="1" fill="#118dff" />
<path d="M653.2 424.0 L724.14 508.85 A110.6 110.6 0 0 1 557.13 478.80 Z" stroke="none" stroke-width="1" fill="#12239e" />
<path d="M653.2 424.0 L557.13 478.80 A110.6 110.6 0 0 1 554.48 473.87 Z" stroke="none" stroke-width="1" fill="#12239e" />
<path d="M653.2 424.0 L554.48 473.87 A110.6 110.6 0 0 1 647.22 313.56 Z" stroke="none" stroke-width="1" fill="#e66c37" />
<path d="M653.2 424.0 L647.22 313.56 A110.6 110.6 0 0 1 652.43 313.40 Z" stroke="none" stroke-width="1" fill="#e8642c" />
<path d="M653.2 424.0 L652.43 313.40 A110.6 110.6 0 0 1 654.17 313.40 Z" stroke="none" stroke-width="1" fill="#9fd0ff" />
<line x1="653.2" y1="424.0" x2="654.1651548261202" y2="313.40421130910266" stroke="#fff" stroke-width="0.9" />
<line x1="653.2" y1="424.0" x2="729.1918786949692" y2="504.3591586093899" stroke="#fff" stroke-width="0.9" />
<line x1="653.2" y1="424.0" x2="724.1443292515489" y2="508.84846579077214" stroke="#fff" stroke-width="0.9" />
<line x1="653.2" y1="424.0" x2="557.129354503136" y2="478.79772872862424" stroke="#fff" stroke-width="0.9" />
<line x1="653.2" y1="424.0" x2="554.480008479195" y2="473.86705600025107" stroke="#fff" stroke-width="0.9" />
<line x1="653.2" y1="424.0" x2="647.2188832838839" y2="313.561844261921" stroke="#fff" stroke-width="0.9" />
<line x1="653.2" y1="424.0" x2="652.4278726110455" y2="313.4026952439833" stroke="#fff" stroke-width="0.9" />
<path d="M653.3 311 V299.3 H657.6" stroke="#a0a0a0" stroke-width="0.6" fill="none" />
<text x="659.6" y="301.47" font-size="5.4" fill="#666666" stroke="#666666" stroke-width="0.097" text-anchor="start" textLength="32.5" lengthAdjust="spacingAndGlyphs" >0.01M (0.19%)</text>
<path d="M759 380.5 L768 377.2 H773.5" stroke="#a0a0a0" stroke-width="0.6" fill="none" />
<text x="775.5" y="379.47" font-size="5.4" fill="#666666" stroke="#666666" stroke-width="0.097" text-anchor="start" textLength="27.5" lengthAdjust="spacingAndGlyphs" >3M (37.55%)</text>
<path d="M555.5 366.5 L546 361.6 H540.5" stroke="#a0a0a0" stroke-width="0.6" fill="none" />
<text x="510.7" y="363.37" font-size="5.4" fill="#666666" stroke="#666666" stroke-width="0.097" text-anchor="start" textLength="27.5" lengthAdjust="spacingAndGlyphs" >2M (31.71%)</text>
<path d="M554.6 476.5 L545 483.3 H539.3" stroke="#a0a0a0" stroke-width="0.6" fill="none" />
<text x="505.5" y="485.37" font-size="5.4" fill="#666666" stroke="#666666" stroke-width="0.097" text-anchor="start" textLength="31.5" lengthAdjust="spacingAndGlyphs" >0.05M (0.71%)</text>
<path d="M731 507.5 L738.5 515.8 H742" stroke="#a0a0a0" stroke-width="0.6" fill="none" />
<text x="743.5" y="517.77" font-size="5.4" fill="#666666" stroke="#666666" stroke-width="0.097" text-anchor="start" textLength="31.5" lengthAdjust="spacingAndGlyphs" >0.07M (0.99%)</text>
<path d="M633.5 535.5 L632 545.8 H627.5" stroke="#a0a0a0" stroke-width="0.6" fill="none" />
<text x="596.7" y="548.17" font-size="5.4" fill="#666666" stroke="#666666" stroke-width="0.097" text-anchor="start" textLength="28" lengthAdjust="spacingAndGlyphs" >2M (27.83%)</text>
<text x="896.3" y="410.30" font-size="5.5" fill="#252423" font-weight="700" text-anchor="start" textLength="23.5" lengthAdjust="spacingAndGlyphs" >Category</text>
<circle cx="898.8" cy="416.9" r="2.3" fill="#118dff" />
<text x="902" y="419.07" font-size="5.4" fill="#555" stroke="#555" stroke-width="0.097" text-anchor="start" textLength="21.5" lengthAdjust="spacingAndGlyphs" >Furniture</text>
<circle cx="898.8" cy="427.79999999999995" r="2.3" fill="#0a1a9a" />
<text x="902" y="429.97" font-size="5.4" fill="#555" stroke="#555" stroke-width="0.097" text-anchor="start" textLength="36.5" lengthAdjust="spacingAndGlyphs" >Office Supplies</text>
<circle cx="898.8" cy="438.7" r="2.3" fill="#e8561a" />
<text x="902" y="440.87" font-size="5.4" fill="#555" stroke="#555" stroke-width="0.097" text-anchor="start" textLength="24.5" lengthAdjust="spacingAndGlyphs" >Technology</text>
<line x1="945.6" y1="267" x2="945.6" y2="601" stroke="#c8c8c8" stroke-width="0.9" />
<path d="M952.8 275.3 h7.5 M954 277.8 h5 M955.4 280.3 h2.2" stroke="#333" stroke-width="1.1" fill="none" />
<text x="966" y="281.69" font-size="8.2" fill="#252423" font-weight="700" text-anchor="start" textLength="24.5" lengthAdjust="spacingAndGlyphs" >Filters</text>
<path d="M1047.2 275.8 L1049.7 278.2 L1047.2 280.6" stroke="#252423" stroke-width="1.3" fill="none" />
<rect x="950.2" y="293.2" width="101.3" height="19" fill="#fff" rx="2" stroke="#c6c6c6" stroke-width="0.9" />
<circle cx="958.5" cy="301.4" r="2.5" fill="none" stroke="#555" stroke-width="0.9" />
<line x1="960.3" y1="303.2" x2="962.3" y2="305.2" stroke="#555" stroke-width="1" />
<text x="970.2" y="305.92" font-size="7.2" fill="#444" stroke="#444" stroke-width="0.130" text-anchor="start" textLength="22.5" lengthAdjust="spacingAndGlyphs" >Search</text>
<line x1="945.6" y1="314.6" x2="1058" y2="314.6" stroke="#d6d6d6" stroke-width="0.9" />
<text x="950.3" y="329.91" font-size="6.6" fill="#252423" stroke="#252423" stroke-width="0.119" text-anchor="start" textLength="98" lengthAdjust="spacingAndGlyphs" >There aren't any filters to display.</text>
<rect x="404" y="601" width="654" height="22.5" fill="#f8f8f8" />
<rect x="414.5" y="607.3" width="3" height="10.8" fill="#e8a800" rx="0.6" />
<rect x="411.5" y="610.8" width="3" height="7.3" fill="#f2c811" rx="0.6" />
<rect x="408.6" y="613.6" width="3" height="4.5" fill="#f7d84a" rx="0.6" />
<text x="423.2" y="609.91" font-size="6.6" fill="#252423" stroke="#252423" stroke-width="0.119" text-anchor="start" textLength="47.5" lengthAdjust="spacingAndGlyphs" >Data Set, Page 1</text>
<line x1="423.2" y1="611.2" x2="471" y2="611.2" stroke="#252423" stroke-width="0.6" />
<rect x="423.5" y="612.8" width="46.5" height="9" fill="#fff" rx="4.5" stroke="#3b9b8a" stroke-width="0.9" />
<circle cx="430" cy="617.3" r="2.2" fill="none" stroke="#3b9b8a" stroke-width="0.7" />
<text x="435" y="619.54" font-size="5.6" fill="#252423" stroke="#252423" stroke-width="0.101" text-anchor="start" textLength="21.5" lengthAdjust="spacingAndGlyphs" >Live data</text>
<path d="M460.7 618.6 L462.6 616.6 L464.5 618.6" stroke="#333" stroke-width="0.7" fill="none" />
<text x="475.5" y="619.84" font-size="5.6" fill="#444" stroke="#444" stroke-width="0.101" text-anchor="start" textLength="91.5" lengthAdjust="spacingAndGlyphs" >Data updated on 11/23/25, 10:01 PM</text>
<path d="M942.6 617.5 v-3 M945.5 617.5 v-7 M948.5 617.5 v-8 M951.3 617.5 v-5" stroke="#555" stroke-width="1.5" fill="none" />
<path d="M955 614.8 L957.5 612.3 L960 614.8" stroke="#555" stroke-width="0.9" fill="none" />
<path d="M973 609 h6.5 v3.5 l-2 3 v3 h-2.5 v-3 l-2 -3 z" stroke="#555" stroke-width="1" fill="none" />
<path d="M985.2 614.8 L987.7 612.3 L990.2 614.8" stroke="#555" stroke-width="0.9" fill="none" />
<rect x="1002.2" y="609.6" width="4" height="4" fill="none" rx="0.8" stroke="#555" stroke-width="0.9" />
<rect x="1002.2" y="614.2" width="4" height="4" fill="none" rx="0.8" stroke="#555" stroke-width="0.9" />
<rect x="1006.8" y="614.2" width="4" height="4" fill="none" rx="0.8" stroke="#555" stroke-width="0.9" />
<path d="M1008.8 609.2 v3.5 M1007 611 h3.5" stroke="#555" stroke-width="0.8" fill="none" />
<path d="M1015.2 614.8 L1017.7 612.3 L1020.2 614.8" stroke="#555" stroke-width="0.9" fill="none" />
<path d="M1044.4 612.8 L1047.2 615.6 L1050 612.8" stroke="#555" stroke-width="0.9" fill="none" />
</g>
<clipPath id="thclip"><rect x="82" y="218" width="255" height="438"/></clipPath>
<g clip-path="url(#thclip)">
<text x="91.6" y="240.36" font-size="11.4" fill="#333" stroke="#333" stroke-width="0.205" text-anchor="start" textLength="4.8" lengthAdjust="spacingAndGlyphs" >1</text>
<text x="91.2" y="375.66" font-size="11.4" fill="#c43e1c" stroke="#c43e1c" stroke-width="0.205" text-anchor="start" textLength="6.2" lengthAdjust="spacingAndGlyphs" >2</text>
<text x="91.2" y="511.96" font-size="11.4" fill="#333" stroke="#333" stroke-width="0.205" text-anchor="start" textLength="6.2" lengthAdjust="spacingAndGlyphs" >3</text>
<text x="91.2" y="648.36" font-size="11.4" fill="#333" stroke="#333" stroke-width="0.205" text-anchor="start" textLength="6.5" lengthAdjust="spacingAndGlyphs" >4</text>
<rect x="110.5" y="233.2" width="210" height="118.3" fill="#fff" rx="4" stroke="#cfcfcf" stroke-width="0.9" />
<pattern id="dots" x="0.5" y="0.3" width="3.1" height="3.1" patternUnits="userSpaceOnUse"><rect x="0.5" y="0.7" width="1.6" height="1.4" fill="#dddddd"/></pattern>
<path d="M144 281 L150 272 L160 266 L178 265 L186 268 L180 276 L183 283 L180 291 L172 296 L164 300 L160 292 L150 290 Z M187 265 L202 265 L200 274 L192 280 L186 275 Z M166 300 L178 306 L192 312 L196 320 L190 334 L182 343 L178 343 L176 330 L172 316 Z M198 278 L214 278 L214 312 L205 312 L200 300 Z M214 264 L240 265 L290 270 L290 280 L214 281 Z" stroke="none" stroke-width="1" fill="url(#dots)" />
<rect x="111.0" y="233.4" width="52.3" height="1.6" fill="#2f3e52" />
<rect x="163.3" y="233.4" width="52.3" height="1.6" fill="#e8782a" />
<rect x="215.6" y="233.4" width="52.3" height="1.6" fill="#2aa8cc" />
<rect x="267.9" y="233.4" width="52.3" height="1.6" fill="#b9c2c6" />
<text x="120.2" y="250.88" font-size="9" fill="#222" font-weight="700" text-anchor="start" textLength="102.5" lengthAdjust="spacingAndGlyphs" >PROFESSIONAL REPORT</text>
<text x="120.2" y="263.38" font-size="9" fill="#222" font-weight="700" text-anchor="start" textLength="128.5" lengthAdjust="spacingAndGlyphs" >POWERPOINT INFOGRAPHICS</text>
<text x="120.2" y="299.10" font-size="7.4" fill="#222" font-weight="700" text-anchor="start" textLength="56.3" lengthAdjust="spacingAndGlyphs" >Power BI Report</text>
<rect x="214.6" y="280.2" width="105.6" height="59.2" fill="#29aacf" />
<text x="230.4" y="300.10" font-size="7.4" fill="#fff" font-weight="700" text-anchor="start" textLength="62" lengthAdjust="spacingAndGlyphs" >Sales Data Report</text>
<rect x="120.0" y="339.2" width="9.3" height="2.6" fill="#2f3e52" />
<rect x="129.3" y="339.2" width="9.3" height="2.6" fill="#e8782a" />
<rect x="138.6" y="339.2" width="9.3" height="2.6" fill="#2aa8cc" />
<rect x="147.9" y="339.2" width="9.3" height="2.6" fill="#b9c2c6" />
<rect x="108.2" y="366.8" width="214.6" height="121.8" fill="#fff" rx="5" stroke="#8b1a1a" stroke-width="2.2" />
<use href="#sl" transform="translate(111.6 370.2) scale(0.2842 0.2806) translate(-365.5 -229)"/>
<rect x="110.5" y="504.4" width="210" height="119.2" fill="#fff" rx="4" stroke="#cfcfcf" stroke-width="0.9" />
<text x="123.3" y="518.23" font-size="6.4" fill="#555" stroke="#555" stroke-width="0.115" text-anchor="start" textLength="21" lengthAdjust="spacingAndGlyphs" >Big Pie</text>
<text x="146.5" y="518.16" font-size="6.2" fill="#c4c4c4" stroke="#c4c4c4" stroke-width="0.112" text-anchor="start" textLength="42.5" lengthAdjust="spacingAndGlyphs" >Edit text here</text>
<path d="M169.60 525.00 A29 29 0 0 1 198.24 558.54 L188.37 556.97 A19 19 0 0 0 169.60 535.00 Z" stroke="none" stroke-width="1" fill="#2f3e52" />
<path d="M198.24 558.54 A29 29 0 0 1 141.87 562.48 L151.43 559.56 A19 19 0 0 0 188.37 556.97 Z" stroke="none" stroke-width="1" fill="#f28a2e" />
<path d="M141.87 562.48 A29 29 0 0 1 143.53 541.29 L152.52 545.67 A19 19 0 0 0 151.43 559.56 Z" stroke="none" stroke-width="1" fill="#2aa8cc" />
<path d="M143.53 541.29 A29 29 0 0 1 169.60 525.00 L169.60 535.00 A19 19 0 0 0 152.52 545.67 Z" stroke="none" stroke-width="1" fill="#b9c5c8" />
<circle cx="169.6" cy="554" r="19" fill="#f2f2f2" />
<circle cx="167" cy="556" r="2" fill="none" stroke="#777" stroke-width="0.6" />
<path d="M163.5 563 L167 558.5 L170.5 563" stroke="#777" stroke-width="0.6" fill="none" />
<path d="M171 547.5 a3.5 2.8 0 1 1 1.5 5 l-1.5 1.3 z" stroke="#777" stroke-width="0.6" fill="none" />
<text x="188.5" y="540.01" font-size="3.6" fill="#fff" font-weight="700" text-anchor="middle" >28%</text>
<text x="169.5" y="579.11" font-size="3.6" fill="#fff" font-weight="700" text-anchor="middle" >47%</text>
<text x="147.8" y="554.51" font-size="3.6" fill="#fff" font-weight="700" text-anchor="middle" >10%</text>
<text x="155" y="535.81" font-size="3.6" fill="#fff" font-weight="700" text-anchor="middle" >17%</text>
<rect x="124.3" y="587" width="44.2" height="12" fill="#f28a2e" />
<text x="140.3" y="591.97" font-size="3.2" fill="#fff" font-weight="700" text-anchor="start" textLength="20" lengthAdjust="spacingAndGlyphs" >You can replace</text>
<text x="140.3" y="595.77" font-size="3.2" fill="#fff" font-weight="700" text-anchor="start" textLength="10" lengthAdjust="spacingAndGlyphs" >this text.</text>
<circle cx="133.3" cy="591" r="3" fill="none" stroke="#fff" stroke-width="0.5" opacity="0.7"/>
<rect x="171.5" y="587" width="44.2" height="12" fill="#2aa8cc" />
<text x="187.5" y="591.97" font-size="3.2" fill="#fff" font-weight="700" text-anchor="start" textLength="20" lengthAdjust="spacingAndGlyphs" >You can replace</text>
<text x="187.5" y="595.77" font-size="3.2" fill="#fff" font-weight="700" text-anchor="start" textLength="10" lengthAdjust="spacingAndGlyphs" >this text.</text>
<circle cx="180.5" cy="591" r="3" fill="none" stroke="#fff" stroke-width="0.5" opacity="0.7"/>
<rect x="124.3" y="600.6" width="44.2" height="12" fill="#2f3e52" />
<text x="140.3" y="605.57" font-size="3.2" fill="#fff" font-weight="700" text-anchor="start" textLength="20" lengthAdjust="spacingAndGlyphs" >You can replace</text>
<text x="140.3" y="609.37" font-size="3.2" fill="#fff" font-weight="700" text-anchor="start" textLength="10" lengthAdjust="spacingAndGlyphs" >this text.</text>
<circle cx="133.3" cy="604.6" r="3" fill="none" stroke="#fff" stroke-width="0.5" opacity="0.7"/>
<rect x="171.5" y="600.6" width="44.2" height="12" fill="#b9c5c8" />
<text x="187.5" y="605.57" font-size="3.2" fill="#fff" font-weight="700" text-anchor="start" textLength="20" lengthAdjust="spacingAndGlyphs" >You can replace</text>
<text x="187.5" y="609.37" font-size="3.2" fill="#fff" font-weight="700" text-anchor="start" textLength="10" lengthAdjust="spacingAndGlyphs" >this text.</text>
<circle cx="180.5" cy="604.6" r="3" fill="none" stroke="#fff" stroke-width="0.5" opacity="0.7"/>
<text x="221" y="528.30" font-size="3.3" fill="#999" stroke="#999" stroke-width="0.059" text-anchor="start" textLength="19" lengthAdjust="spacingAndGlyphs" >Sample Text</text>
<rect x="247.8" y="525.4" width="44.5" height="3.5" fill="#2f3e52" />
<rect x="247.8" y="525.4" width="40.69999999999999" height="3.5" fill="#24a3d0" />
<text x="294.5" y="528.88" font-size="4.6" fill="#2aa8cc" stroke="#2aa8cc" stroke-width="0.083" text-anchor="start" textLength="9.5" lengthAdjust="spacingAndGlyphs" >90%</text>
<text x="221" y="534.60" font-size="3.3" fill="#999" stroke="#999" stroke-width="0.059" text-anchor="start" textLength="19" lengthAdjust="spacingAndGlyphs" >Sample Text</text>
<rect x="247.8" y="531.6999999999999" width="44.5" height="3.5" fill="#2f3e52" />
<rect x="247.8" y="531.6999999999999" width="31.69999999999999" height="3.5" fill="#24a3d0" />
<text x="294.5" y="535.18" font-size="4.6" fill="#2aa8cc" stroke="#2aa8cc" stroke-width="0.083" text-anchor="start" textLength="9.5" lengthAdjust="spacingAndGlyphs" >70%</text>
<text x="221" y="540.90" font-size="3.3" fill="#999" stroke="#999" stroke-width="0.059" text-anchor="start" textLength="19" lengthAdjust="spacingAndGlyphs" >Sample Text</text>
<rect x="247.8" y="538.0" width="44.5" height="3.5" fill="#2f3e52" />
<rect x="247.8" y="538.0" width="27.69999999999999" height="3.5" fill="#24a3d0" />
<text x="294.5" y="541.48" font-size="4.6" fill="#2aa8cc" stroke="#2aa8cc" stroke-width="0.083" text-anchor="start" textLength="9.5" lengthAdjust="spacingAndGlyphs" >60%</text>
<rect x="221" y="550" width="45" height="24.5" fill="#3a3a3a" />
<rect x="222.5" y="551.8" width="42" height="21" fill="#595959" />
<path d="M232 557 h6 l2 2 h-3 l-1 3 l-3 -1 z M240 556.5 h9 l2 2 l-3 4 l-3 -1 h-3 z M236 562 l2 4 l-1.5 2 z M244 562 l2 1 l-1 4 z M249 565 l2 1 l-1 1.5 z" stroke="none" stroke-width="1" fill="#fff" />
<rect x="221" y="575.5" width="45" height="3.2" fill="#d9d9d9" />
<rect x="238" y="579" width="11.5" height="4.5" fill="#b8b8b8" />
<rect x="235" y="583.5" width="18" height="1.4" fill="#cfcfcf" />
<text x="271" y="553.28" font-size="4.6" fill="#555" stroke="#555" stroke-width="0.083" text-anchor="start" textLength="30" lengthAdjust="spacingAndGlyphs" >Placeholder Text</text>
<text x="271" y="557.77" font-size="3.2" fill="#8a8a8a" stroke="#8a8a8a" stroke-width="0.058" text-anchor="start" textLength="30" lengthAdjust="spacingAndGlyphs" >You can replace this text.</text>
<text x="271" y="562.17" font-size="3.2" fill="#8a8a8a" stroke="#8a8a8a" stroke-width="0.058" text-anchor="start" textLength="20" lengthAdjust="spacingAndGlyphs" >This is a sample.</text>
<text x="271" y="570.17" font-size="3.2" fill="#8a8a8a" stroke="#8a8a8a" stroke-width="0.058" text-anchor="start" textLength="30" lengthAdjust="spacingAndGlyphs" >You can replace this text.</text>
<text x="271" y="574.17" font-size="3.2" fill="#8a8a8a" stroke="#8a8a8a" stroke-width="0.058" text-anchor="start" textLength="32" lengthAdjust="spacingAndGlyphs" >This is a sample. You can</text>
<text x="271" y="578.17" font-size="3.2" fill="#8a8a8a" stroke="#8a8a8a" stroke-width="0.058" text-anchor="start" textLength="20" lengthAdjust="spacingAndGlyphs" >replace this text.</text>
<text x="221" y="600.05" font-size="7" fill="#3a3a3a" font-weight="700" text-anchor="start" textLength="49" lengthAdjust="spacingAndGlyphs" >Placeholder Text</text>
<line x1="221" y1="602.8" x2="307" y2="602.8" stroke="#b4dbe6" stroke-width="0.6" />
<text x="221" y="607.67" font-size="3.2" fill="#8a8a8a" stroke="#8a8a8a" stroke-width="0.058" text-anchor="start" textLength="80" lengthAdjust="spacingAndGlyphs" >You can replace this text. This is a sample. You can replace</text>
<text x="221" y="611.67" font-size="3.2" fill="#8a8a8a" stroke="#8a8a8a" stroke-width="0.058" text-anchor="start" textLength="62" lengthAdjust="spacingAndGlyphs" >this text. This is a sample. You can replace this text.</text>
<rect x="110.5" y="640.2" width="210" height="40" fill="#fff" rx="4" stroke="#cfcfcf" stroke-width="0.9" />
<text x="123.3" y="653.73" font-size="6.4" fill="#555" stroke="#555" stroke-width="0.115" text-anchor="start" textLength="26" lengthAdjust="spacingAndGlyphs" >Timeline</text>
<text x="152.5" y="653.66" font-size="6.2" fill="#c4c4c4" stroke="#c4c4c4" stroke-width="0.112" text-anchor="start" textLength="42.5" lengthAdjust="spacingAndGlyphs" >Edit text here</text>
</g>
<text x="90" y="669.23" font-size="9.4" fill="#262626" stroke="#262626" stroke-width="0.169" text-anchor="start" textLength="48.5" lengthAdjust="spacingAndGlyphs" >Slide 2 of 11</text>
<path d="M154.5 660.5 h4 q1.5 0 1.5 1.5 v9.5 q-1.5 -1.5 -4 -1.5 h-1.5 z" stroke="#4a4a4a" stroke-width="1" fill="none" />
<path d="M166.5 660.5 h-4 q-1.5 0 -1.5 1.5 v9.5" stroke="#4a4a4a" stroke-width="1" fill="none" />
<path d="M162.5 668.5 L164.3 670.5 L167.5 665.5" stroke="#4a4a4a" stroke-width="1.1" fill="none" />
<text x="179.3" y="669.23" font-size="9.4" fill="#262626" stroke="#262626" stroke-width="0.169" text-anchor="start" textLength="87.5" lengthAdjust="spacingAndGlyphs" >English (United States)</text>
<circle cx="284.2" cy="660.8" r="1.6" fill="none" stroke="#4a4a4a" stroke-width="0.9" />
<path d="M279.5 663.5 L289 663.5 M284.2 663.5 v3.5 L281.5 671 M284.2 667 L285.5 669" stroke="#4a4a4a" stroke-width="1" fill="none" />
<path d="M285.8 667.5 L290 671.8 M290 667.5 L285.8 671.8" stroke="#4a4a4a" stroke-width="1" fill="none" />
<text x="292.8" y="669.23" font-size="9.4" fill="#1a1a1a" font-weight="700" text-anchor="start" textLength="104.5" lengthAdjust="spacingAndGlyphs" >Accessibility: Investigate</text>
<path d="M766.8 662 L770.3 659.3 L773.8 662" stroke="#4a4a4a" stroke-width="1" fill="none" />
<line x1="763.8" y1="664.8" x2="777" y2="664.8" stroke="#4a4a4a" stroke-width="0.9" />
<line x1="763.8" y1="668.3" x2="777" y2="668.3" stroke="#4a4a4a" stroke-width="0.9" />
<line x1="763.8" y1="671.8" x2="777" y2="671.8" stroke="#4a4a4a" stroke-width="0.9" />
<text x="779" y="669.23" font-size="9.4" fill="#262626" stroke="#262626" stroke-width="0.169" text-anchor="start" textLength="22.5" lengthAdjust="spacingAndGlyphs" >Notes</text>
<rect x="827.6" y="661.3" width="11.5" height="9.5" fill="none" rx="1" stroke="#333" stroke-width="1.1" />
<line x1="830.3" y1="661.8" x2="830.3" y2="670.3" stroke="#333" stroke-width="1" />
<rect x="832" y="663.3" width="4.6" height="3.2" fill="none" rx="0.6" stroke="#333" stroke-width="0.9" />
<rect x="860.5" y="661.2" width="4.8" height="3.8" fill="none" rx="1" stroke="#4a4a4a" stroke-width="1" />
<rect x="867.5" y="661.2" width="4.8" height="3.8" fill="none" rx="1" stroke="#4a4a4a" stroke-width="1" />
<rect x="860.5" y="667" width="4.8" height="3.8" fill="none" rx="1" stroke="#4a4a4a" stroke-width="1" />
<rect x="867.5" y="667" width="4.8" height="3.8" fill="none" rx="1" stroke="#4a4a4a" stroke-width="1" />
<path d="M893.8 661.5 q3 -0.5 5.5 1 q2.5 -1.5 5.5 -1 v9.5 q-3 -0.5 -5.5 1 q-2.5 -1.5 -5.5 -1 z M899.3 662.5 v9.5" stroke="#4a4a4a" stroke-width="1" fill="none" />
<path d="M896 662 v9 M902.5 662 v9" stroke="#4a4a4a" stroke-width="0.6" fill="none" />
<rect x="926.3" y="660.8" width="11.4" height="6" fill="none" rx="0.5" stroke="#4a4a4a" stroke-width="1" />
<path d="M930.3 662.8 L933.5 663.8 L930.3 664.8" stroke="#4a4a4a" stroke-width="0.8" fill="none" />
<path d="M932 666.8 v3.8 M929 671 h6" stroke="#4a4a4a" stroke-width="1" fill="none" />
<line x1="953.9" y1="665.5" x2="959.7" y2="665.5" stroke="#4a4a4a" stroke-width="1" />
<line x1="965" y1="665.5" x2="1046.5" y2="665.5" stroke="#4a4a4a" stroke-width="0.9" />
<rect x="990" y="661" width="4.5" height="9.2" fill="#505050" rx="0.5" />
<line x1="1005.8" y1="663" x2="1005.8" y2="668" stroke="#4a4a4a" stroke-width="0.9" />
<path d="M1051.2 665.5 h6 M1054.2 662.5 v6" stroke="#4a4a4a" stroke-width="1" fill="none" />
<text x="1067" y="669.23" font-size="9.4" fill="#262626" stroke="#262626" stroke-width="0.169" text-anchor="start" textLength="18" lengthAdjust="spacingAndGlyphs" >69%</text>
<rect x="1099" y="663.2" width="5.4" height="5.2" fill="none" stroke="#333" stroke-width="1.1" />
<path d="M1099.6 661.2 L1101.7 659.3 L1103.8 661.2 M1099.6 670.4 L1101.7 672.3 L1103.8 670.4 M1097 663.7 L1095.2 665.8 L1097 667.9 M1106.4 663.7 L1108.2 665.8 L1106.4 667.9" stroke="#333" stroke-width="1.2" fill="none" />
<path d="M1101.7 659.5 v3.7 M1101.7 668.4 v3.7 M1095.4 665.8 h3.6 M1104.4 665.8 h3.6" stroke="#333" stroke-width="0.8" fill="none" />
</svg>
<div class="a" style="left:80px;top:68px;width:1042px;height:608px;border-radius:8px;border:1.6px solid #c43e1c;box-shadow:0 0 0 1px rgba(205,228,240,0.9);pointer-events:none"></div>
<div class="a" style="left:1022px;top:705px;font-size:14.5px;color:#595959;white-space:nowrap;line-height:17px">SLIDEMODEL.COM</div>
</body></html>
